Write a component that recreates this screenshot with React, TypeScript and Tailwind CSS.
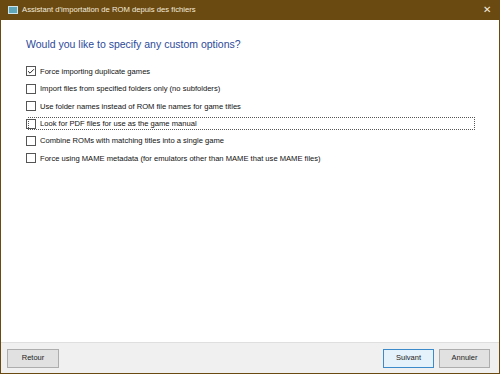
import { Check } from "lucide-react";

const options = [
  { label: "Force importing duplicate games", checked: true },
  { label: "Import files from specified folders only (no subfolders)" },
  { label: "Use folder names instead of ROM file names for game titles" },
  { label: "Look for PDF files for use as the game manual", focused: true },
  { label: "Combine ROMs with matching titles into a single game" },
  { label: "Force using MAME metadata (for emulators other than MAME that use MAME files)" },
];

export default function App() {
  return (
    <div
      className="w-[500px] h-[374px] flex flex-col bg-[#6b4a12] px-[1px] pb-[1px] overflow-hidden"
      style={{ fontFamily: '"Liberation Sans", Arial, sans-serif' }}
    >
      {/* Title bar */}
      <div className="h-[20px] flex items-center shrink-0 pl-[7px] pr-[8px]">
        <div className="w-[10px] h-[8px] bg-[#5fa6b8] border border-[#cfe3ea] mr-[4px]" />
        <span className="text-[7.7px] text-[#f3eadb]">Assistant d'importation de ROM depuis des fichiers</span>
        <span className="ml-auto text-[10px] text-[#f3eadb] leading-none">✕</span>
      </div>

      {/* Content */}
      <div className="flex-1 bg-white flex flex-col">
        <div className="flex-1 pl-[25px] pr-[22px] pt-[17px]">
          <h1 className="text-[10.5px] text-[#2c4a9a] mb-[10px]">Would you like to specify any custom options?</h1>
          <div className="flex flex-col">
            {options.map((o) => (
              <div
                key={o.label}
                className={`h-[17.4px] flex items-center gap-[3px] ${
                  o.focused ? "outline outline-1 outline-dotted outline-[#555] -outline-offset-[3px]" : ""
                }`}
              >
                <div className="w-[10px] h-[10px] border border-[#555] bg-white flex items-center justify-center">
                  {o.checked && <Check className="w-[9px] h-[9px] text-[#222]" strokeWidth={3} />}
                </div>
                <span className="text-[7.6px] text-[#111] ml-[1px]">{o.label}</span>
              </div>
            ))}
          </div>
        </div>

        {/* Footer */}
        <div className="h-[31px] bg-[#f0f0f0] border-t border-[#dfdfdf] flex items-center px-[6px] shrink-0">
          <button className="w-[52px] h-[19px] bg-[#e1e1e1] border border-[#adadad] text-[7.5px] text-[#222]">Retour</button>
          <button className="ml-auto w-[51px] h-[19px] bg-[#e5f1fb] border border-[#3c8ac9] text-[7.5px] text-[#222]">Suivant</button>
          <button className="ml-[5px] mr-[3px] w-[51px] h-[19px] bg-[#e1e1e1] border border-[#adadad] text-[7.5px] text-[#222]">Annuler</button>
        </div>
      </div>
    </div>
  );
}
